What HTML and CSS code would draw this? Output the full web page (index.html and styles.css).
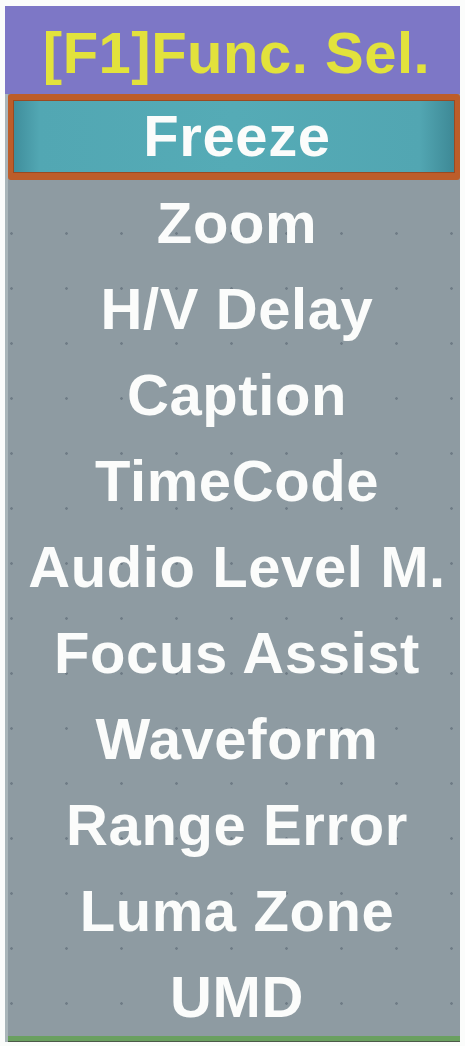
FILE: index.html
```html
<!DOCTYPE html>
<html>
<head>
<meta charset="utf-8">
<link rel="stylesheet" href="styles.css">
</head>
<body>
<div class="panel">
  <div class="header">[F1]Func. Sel.</div>
  <div class="list">
    <div class="item selected"><span>Freeze</span></div>
    <div class="item">Zoom</div>
    <div class="item">H/V Delay</div>
    <div class="item">Caption</div>
    <div class="item">TimeCode</div>
    <div class="item">Audio Level M.</div>
    <div class="item">Focus Assist</div>
    <div class="item">Waveform</div>
    <div class="item">Range Error</div>
    <div class="item">Luma Zone</div>
    <div class="item">UMD</div>
  </div>
  <div class="footer"></div>
</div>
</body>
</html>
```
FILE: styles.css
```css
html, body {
  margin: 0;
  padding: 0;
  background: #fbfcfb;
}
body {
  padding: 6px 5px 4px 5px;
  font-family: "Liberation Sans", Arial, sans-serif;
  font-weight: bold;
}
.panel {
  box-sizing: border-box;
  width: 455px;
  display: flex;
  flex-direction: column;
  background-color: #8e9ba2;
  background-image: radial-gradient(circle, #6f7c86 1px, transparent 1.6px);
  background-size: 55px 55px;
  background-position: -24px -20px;
  border-left: 3px solid #a9b5b9;
}
.header {
  height: 88px;
  background: #7d77c6;
  color: #e2e23c;
  font-size: 58px;
  line-height: 94px;
  text-align: center;
  margin-left: -3px;
  padding-left: 8px;
  overflow: hidden;
  letter-spacing: 0.5px;
}
.list {
  display: flex;
  flex-direction: column;
}
.item {
  height: 86px;
  line-height: 86px;
  font-size: 58px;
  color: #fbfcfb;
  text-align: center;
  white-space: nowrap;
  letter-spacing: 0.6px;
  padding-left: 6px;
}
.selected {
  box-sizing: border-box;
  border: 5px solid #bd5d2a;
  border-top-width: 6px;
  border-bottom-width: 7px;
  border-radius: 3px;
  background: linear-gradient(to right, #3f8d9b 0%, #52a7b3 6%, #55abb6 50%, #52a6b2 92%, #3d8895 100%);
  line-height: 72px;
  box-shadow: inset 0 0 0 1px #9a4a22;
}
.footer {
  height: 6px;
  margin-top: -4px;
  background: linear-gradient(#6aa060 0, #6aa060 5px, #4c5a48 5px);
}
```
